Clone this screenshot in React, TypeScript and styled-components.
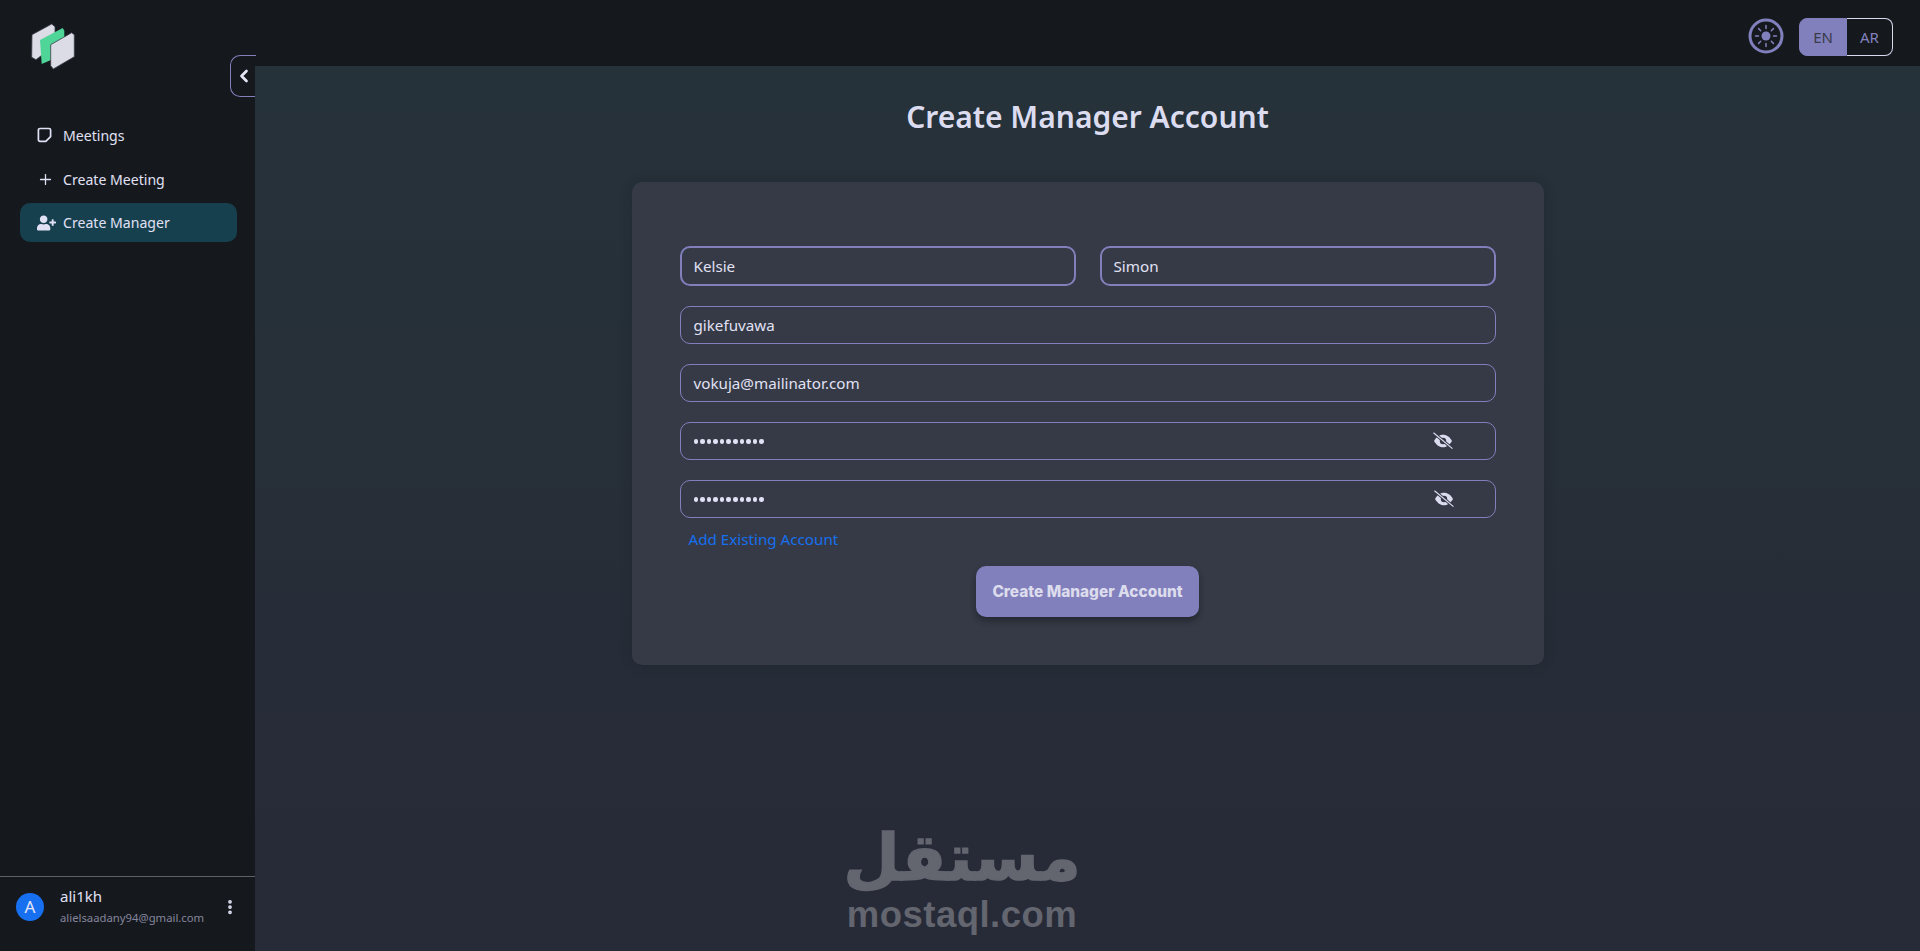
import React from "react";
import styled, { createGlobalStyle } from "styled-components";
import { Plus, ChevronLeft, EllipsisVertical } from "lucide-react";
import { FaUserPlus } from "react-icons/fa";

const GlobalStyle = createGlobalStyle`
  html, body {
    margin: 0;
    padding: 0;
    height: 100%;
    background: #15191e;
  }
  * {
    box-sizing: border-box;
  }
`;

const Page = styled.div`
  display: flex;
  height: 951px;
  overflow: hidden;
  font-family: "Noto Sans", "Open Sans", sans-serif;
  color: #e1e1f0;
  position: relative;
`;

const Sidebar = styled.aside`
  width: 255px;
  flex-shrink: 0;
  background: #15191e;
  display: flex;
  flex-direction: column;
  position: relative;
`;

const LogoWrap = styled.div`
  height: 113px;
  padding: 21px 0 0 30px;
`;

const CollapseButton = styled.button`
  position: absolute;
  top: 55px;
  left: 230px;
  width: 26px;
  height: 42px;
  padding: 0;
  border: 1px solid #8280bc;
  border-right: none;
  border-radius: 10px 0 0 10px;
  background: #15191e;
  color: #e6e6f5;
  display: flex;
  align-items: center;
  justify-content: center;
`;

const Nav = styled.nav`
  display: flex;
  flex-direction: column;
  padding: 0 18px 0 20px;
  flex: 1;
`;

const NavItem = styled.div<{ $active?: boolean }>`
  height: ${(p) => (p.$active ? "39px" : "44px")};
  margin-top: ${(p) => (p.$active ? "2px" : "0")};
  display: flex;
  align-items: center;
  gap: 7px;
  padding-left: 17px;
  border-radius: 10px;
  font-size: 14.1px;
  color: #e1e1f5;
  background: ${(p) => (p.$active ? "#17404f" : "transparent")};
`;

const NavIcon = styled.span`
  width: 19px;
  display: flex;
  justify-content: flex-start;
`;

const UserBar = styled.div`
  height: 75px;
  border-top: 1px solid #5f5f6c;
  display: flex;
  align-items: center;
  padding: 0 16px 15px;
`;

const Avatar = styled.div`
  width: 28px;
  height: 28px;
  border-radius: 50%;
  background: #1670f0;
  color: #e6e6f5;
  font-size: 17px;
  display: flex;
  align-items: center;
  justify-content: center;
`;

const UserText = styled.div`
  margin-left: 16px;
  flex: 1;
  display: flex;
  flex-direction: column;
  gap: 5px;
`;

const UserName = styled.div`
  font-size: 15px;
  line-height: 18px;
  color: #e1e1f5;
`;

const UserMail = styled.div`
  font-size: 11.3px;
  line-height: 16px;
  color: #85859c;
`;

const Main = styled.main`
  flex: 1;
  display: flex;
  flex-direction: column;
  min-width: 0;
`;

const TopBar = styled.header`
  height: 66px;
  flex-shrink: 0;
  background: #15191e;
  display: flex;
  align-items: flex-start;
  justify-content: flex-end;
  gap: 15px;
  padding: 18px 27px 0 0;
`;

const LangToggle = styled.div`
  display: flex;
  width: 94px;
  height: 38px;
`;

const LangOption = styled.div<{ $active?: boolean }>`
  display: flex;
  align-items: center;
  justify-content: center;
  font-size: 15px;
  width: ${(p) => (p.$active ? "48px" : "46px")};
  background: ${(p) => (p.$active ? "#8280bc" : "transparent")};
  color: ${(p) => (p.$active ? "#383b4a" : "#8280bc")};
  border: 1px solid ${(p) => (p.$active ? "#8280bc" : "#d8d8ee")};
  border-left-width: ${(p) => (p.$active ? "1px" : "0")};
  border-radius: ${(p) => (p.$active ? "8px 0 0 8px" : "0 8px 8px 0")};
`;

const Content = styled.div`
  flex: 1;
  position: relative;
  background: linear-gradient(180deg, #263239 0%, #272a37 100%);
  display: flex;
  flex-direction: column;
  align-items: center;
  padding-top: 30px;
`;

const Title = styled.h1`
  margin: 0 0 44px;
  font-size: 30px;
  line-height: 42px;
  font-weight: 600;
  color: #dcdcf0;
`;

const Card = styled.form`
  width: 912px;
  height: 483px;
  background: #353a46;
  border-radius: 10px;
  padding: 64px 48px 0;
  display: flex;
  flex-direction: column;
  box-shadow: 0 0 12px rgba(20, 24, 32, 0.25);
`;

const NameRow = styled.div`
  display: grid;
  grid-template-columns: 1fr 1fr;
  gap: 24px;
  margin-bottom: 20px;
`;

const Field = styled.div<{ $bold?: boolean; $last?: boolean }>`
  height: ${(p) => (p.$bold ? "40px" : "38px")};
  border: ${(p) => (p.$bold ? "2px" : "1px")} solid #8280bc;
  border-radius: 10px;
  display: flex;
  align-items: center;
  justify-content: space-between;
  padding: 0 ${(p) => (p.$bold ? "12px" : "13px")};
  margin-bottom: ${(p) => (p.$last ? "0" : "20px")};
  font-size: 15.2px;
  color: #e1e1f5;
`;

const NameField = styled(Field)`
  margin-bottom: 0;
`;

const Dots = styled.span`
  display: flex;
  gap: 2.1px;
  padding-top: 1px;
`;

const Dot = styled.i`
  width: 4.5px;
  height: 4.5px;
  border-radius: 50%;
  background: #e1e1f5;
`;

const EyeButton = styled.span<{ $shift: number }>`
  display: flex;
  margin-right: ${(p) => p.$shift}px;
`;

const ExistingLink = styled.a`
  margin: 10px 0 0 9px;
  font-size: 15.2px;
  line-height: 22px;
  color: #1670f0;
`;

const SubmitButton = styled.button`
  align-self: center;
  margin-top: 16px;
  width: 223px;
  height: 51px;
  border: none;
  border-radius: 10px;
  background: #8280bc;
  color: #dcdcec;
  font-family: "Inter", "Noto Sans", sans-serif;
  font-size: 15.4px;
  font-weight: 800;
  box-shadow: 0 4px 6px rgba(15, 18, 25, 0.45);
`;

const Watermark = styled.div`
  position: absolute;
  left: 589px;
  top: 754px;
  width: 236px;
  display: flex;
  flex-direction: column;
  align-items: center;
  color: #63656f;
  font-family: "DejaVu Sans", sans-serif;
  font-weight: 700;
`;

const WatermarkArabic = styled.div`
  font-size: 65px;
  line-height: 75px;
  -webkit-text-stroke: 1.5px #63656f;
`;

const WatermarkLatin = styled.div`
  font-family: "Liberation Sans", sans-serif;
  font-size: 36.5px;
  line-height: 40px;
  letter-spacing: 0.5px;
`;

const Logo = () => (
  <svg width="46" height="50" viewBox="0 0 46 50">
    <path d="M2 13.7 L21.7 3 L25 5.7 V24 L6 38.7 L1.7 36.3 Z" fill="#dcdce6" stroke="#3a3c4a" strokeWidth="0.8" />
    <path d="M10 19 L32.7 7 L34.3 9.7 V30 L19.3 39.7 L11.7 43 Z" fill="#4fd597" />
    <path d="M20.7 23.7 L41.7 11.7 L44.3 13.7 V35.7 L23.3 48 L20.7 44.7 Z" fill="#dcdce6" stroke="#3a3c4a" strokeWidth="0.8" />
  </svg>
);

const NoteIcon = () => (
  <svg width="15" height="16" viewBox="0 0 15 16" fill="none" stroke="#e1e1f5" strokeWidth="1.7" strokeLinejoin="round">
    <path d="M3 1.5 H12 A1.6 1.6 0 0 1 13.6 3.1 V9.6 L8.8 14.4 H3 A1.6 1.6 0 0 1 1.4 12.8 V3.1 A1.6 1.6 0 0 1 3 1.5 Z" />
  </svg>
);

const SunIcon = () => (
  <svg width="36" height="36" viewBox="0 0 36 36" fill="none" stroke="#8280bc">
    <circle cx="18" cy="18" r="16" strokeWidth="3" />
    <circle cx="18" cy="18" r="4.5" fill="#8280bc" stroke="none" />
    <g strokeWidth="1.5" strokeLinecap="round">
      <path d="M18 7.5v3M18 25.5v3M7.5 18h3M25.5 18h3M10.6 10.6l2.1 2.1M23.3 23.3l2.1 2.1M10.6 25.4l2.1-2.1M23.3 12.7l2.1-2.1" />
    </g>
  </svg>
);

const EyeOffIcon = () => (
  <svg width="22" height="18" viewBox="0 0 22 18" fill="none">
    <path d="M2 9 C5 4 8 2.8 11 2.8 S17 4 20 9 C17 14 14 15.2 11 15.2 S5 14 2 9 Z" fill="#dcdcf0" />
    <circle cx="11" cy="9" r="3.2" fill="#353a46" />
    <path d="M1.5 0.8 L20.5 16.6" stroke="#353a46" strokeWidth="3" />
    <path d="M1.5 0.8 L20.5 16.6" stroke="#dcdcf0" strokeWidth="1.2" />
  </svg>
);

const PasswordDots = () => (
  <Dots>
    {Array.from({ length: 11 }).map((_, i) => (
      <Dot key={i} />
    ))}
  </Dots>
);

export default function App() {
  return (
    <Page>
      <GlobalStyle />
      <Sidebar>
        <LogoWrap>
          <Logo />
        </LogoWrap>
        <CollapseButton type="button">
          <ChevronLeft size={20} strokeWidth={3.2} />
        </CollapseButton>
        <Nav>
          <NavItem>
            <NavIcon>
              <NoteIcon />
            </NavIcon>
            Meetings
          </NavItem>
          <NavItem>
            <NavIcon>
              <Plus size={17} strokeWidth={1.8} />
            </NavIcon>
            Create Meeting
          </NavItem>
          <NavItem $active>
            <NavIcon>
              <FaUserPlus size={20} />
            </NavIcon>
            Create Manager
          </NavItem>
        </Nav>
        <UserBar>
          <Avatar>A</Avatar>
          <UserText>
            <UserName>ali1kh</UserName>
            <UserMail>alielsaadany94@gmail.com</UserMail>
          </UserText>
          <EllipsisVertical size={18} strokeWidth={3} color="#e1e1f5" />
        </UserBar>
      </Sidebar>
      <Main>
        <TopBar>
          <SunIcon />
          <LangToggle>
            <LangOption $active>EN</LangOption>
            <LangOption>AR</LangOption>
          </LangToggle>
        </TopBar>
        <Content>
          <Title>Create Manager Account</Title>
          <Card>
            <NameRow>
              <NameField $bold>Kelsie</NameField>
              <NameField $bold>Simon</NameField>
            </NameRow>
            <Field>gikefuvawa</Field>
            <Field>vokuja@mailinator.com</Field>
            <Field>
              <PasswordDots />
              <EyeButton $shift={28}>
                <EyeOffIcon />
              </EyeButton>
            </Field>
            <Field $last>
              <PasswordDots />
              <EyeButton $shift={27}>
                <EyeOffIcon />
              </EyeButton>
            </Field>
            <ExistingLink>Add Existing Account</ExistingLink>
            <SubmitButton type="button">Create Manager Account</SubmitButton>
          </Card>
          <Watermark>
            <WatermarkArabic>مستقل</WatermarkArabic>
            <WatermarkLatin>mostaql.com</WatermarkLatin>
          </Watermark>
        </Content>
      </Main>
    </Page>
  );
}
